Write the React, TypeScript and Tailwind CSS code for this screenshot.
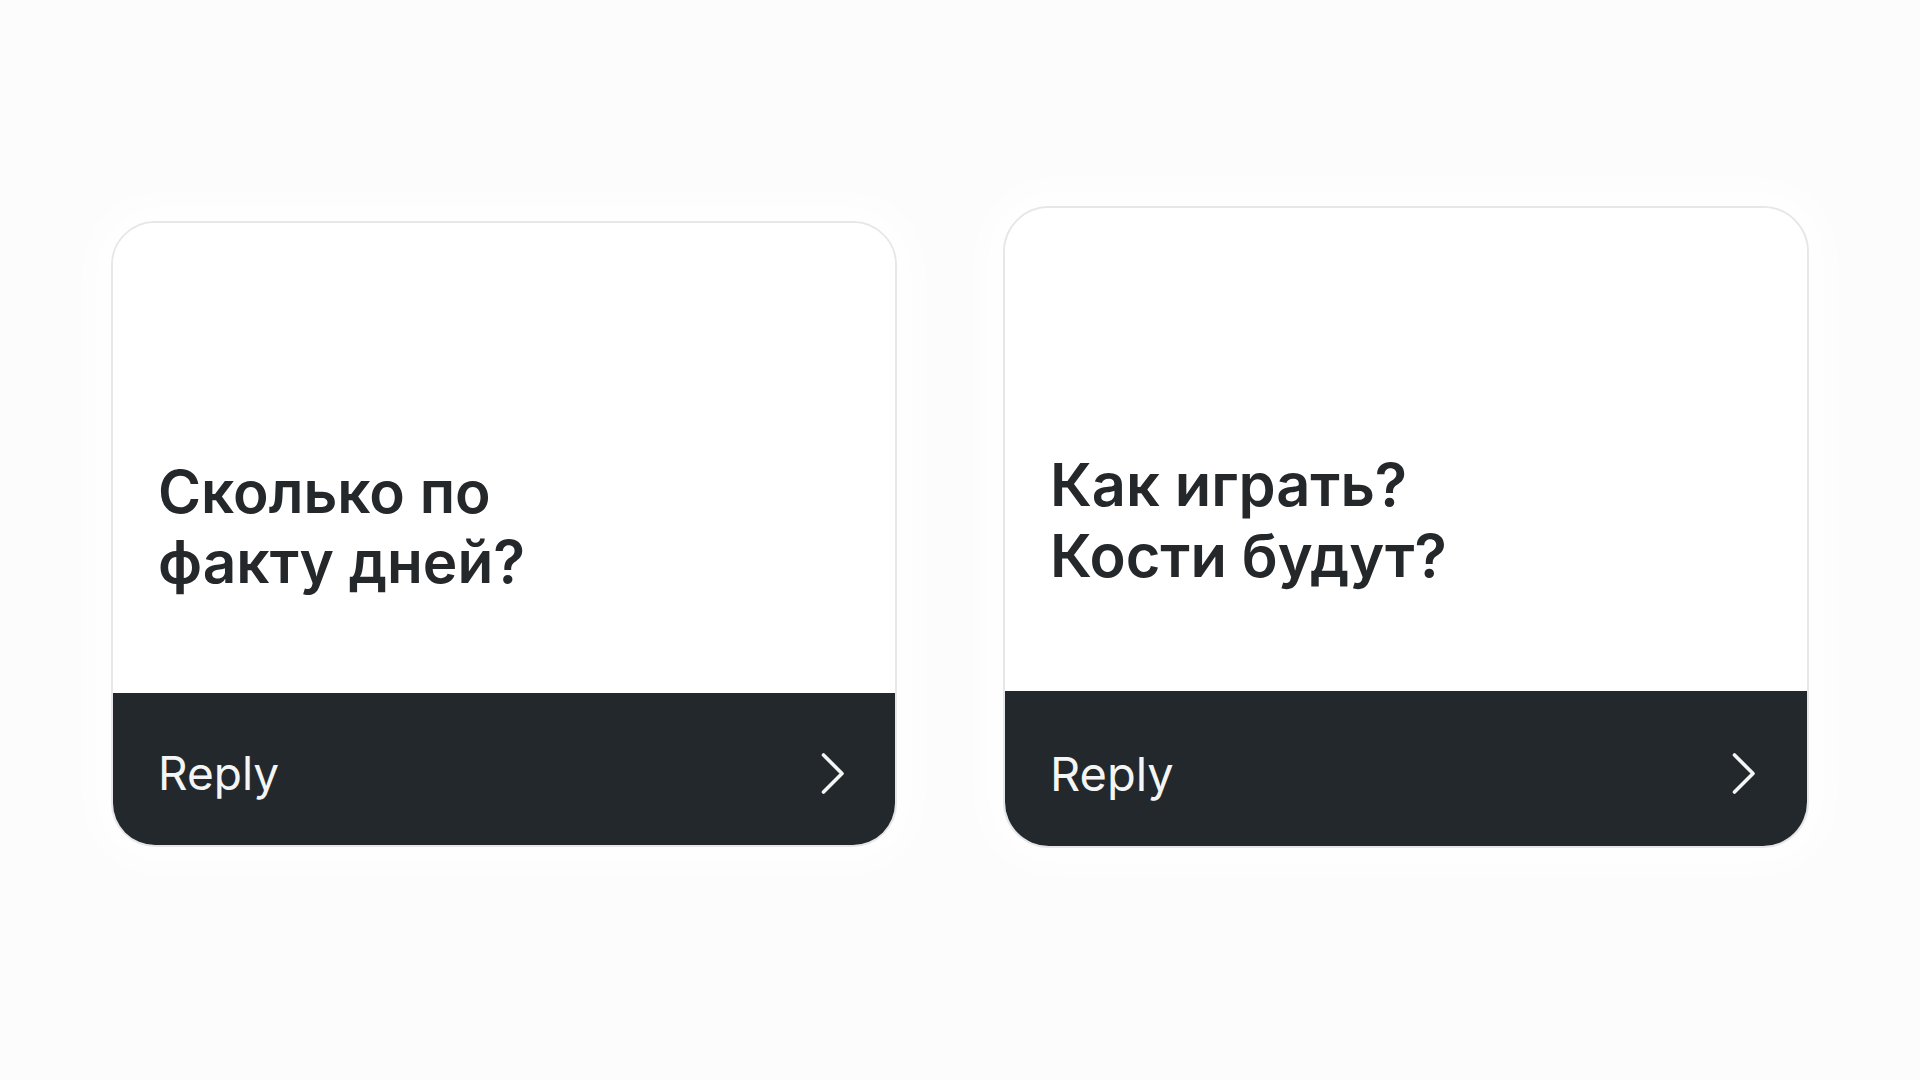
import { type ReactNode } from "react";

function Chevron() {
  return (
    <svg width="26" height="43" viewBox="0 0 26 43" fill="none" className="shrink-0">
      <path
        d="M3.5 3 L22 21.5 L3.5 40"
        stroke="#f4f5f5"
        strokeWidth="3.6"
        strokeLinecap="round"
        strokeLinejoin="round"
      />
    </svg>
  );
}

function QuestionCard({
  className,
  topClass,
  textClass,
  barClass,
  replyClass,
  children,
}: {
  className: string;
  topClass: string;
  textClass: string;
  barClass: string;
  replyClass: string;
  children: ReactNode;
}) {
  return (
    <div
      className={`flex shrink-0 flex-col overflow-hidden border-2 border-[#e7e7e9] bg-white shadow-[0_0_40px_18px_rgba(255,255,255,0.9)] ${className}`}
    >
      <div className={`bg-white ${topClass}`}>
        <p className={`font-semibold text-[#25282b] ${textClass}`}>{children}</p>
      </div>
      <div className={`flex items-center justify-between bg-[#22282c] ${barClass}`}>
        <span className={`font-normal text-[#f4f5f5] ${replyClass}`}>Reply</span>
        <Chevron />
      </div>
    </div>
  );
}

export default function App() {
  return (
    <div
      className="min-h-screen w-full bg-[#fcfcfc]"
      style={{ fontFamily: "Inter, 'Noto Sans', 'Liberation Sans', sans-serif" }}
    >
      <div className="flex items-start gap-[106px] pl-[111px] pt-[206px]">
        <QuestionCard
          className="mt-[15px] h-[626px] w-[786px] rounded-[44px]"
          topClass="h-[470px] pl-[45px] pt-[234px]"
          textClass="text-[58.5px] leading-[70px]"
          barClass="h-[152px] pl-[45px] pr-[49px] pt-[8px]"
          replyClass="text-[46px] leading-[46px]"
        >
          Сколько по
          <br />
          факту дней?
        </QuestionCard>
        <QuestionCard
          className="h-[642px] w-[806px] rounded-[46px]"
          topClass="h-[484px] pl-[45px] pt-[241px]"
          textClass="text-[59.5px] leading-[71px]"
          barClass="h-[156px] pl-[45px] pr-[50px] pt-[10px]"
          replyClass="text-[47px] leading-[47px]"
        >
          Как играть?
          <br />
          Кости будут?
        </QuestionCard>
      </div>
    </div>
  );
}
